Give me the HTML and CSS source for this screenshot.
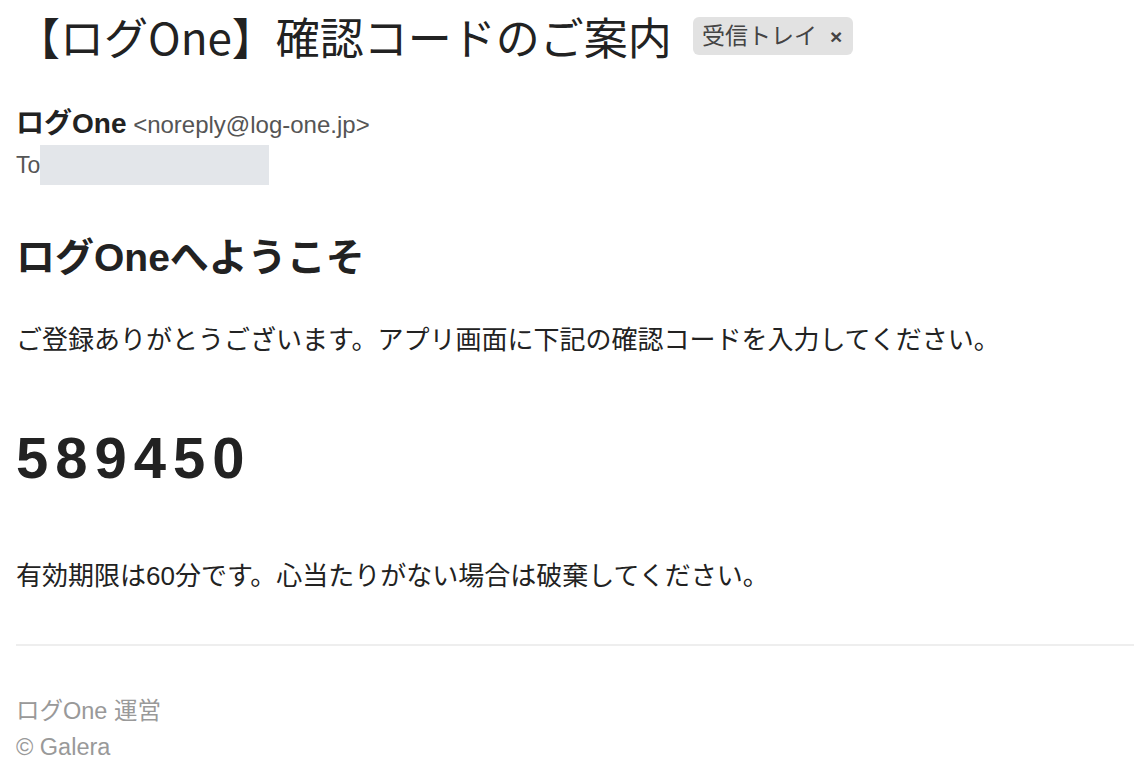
FILE: index.html
```html
<!DOCTYPE html>
<html lang="ja">
  <head>
    <meta charset="UTF-8" />
    <meta name="viewport" content="width=device-width, initial-scale=1.0" />
    <title>【ログOne】確認コードのご案内</title>
    <link rel="stylesheet" href="styles.css">
  </head>
  <body>
    <div class="mail">
      <div class="subjectRow">
        <h1 class="subject">【ログOne】確認コードのご案内</h1>
        <span class="label">受信トレイ <span class="labelClose">×</span></span>
      </div>

      <div class="header">
        <div class="from"><b class="fromName">ログOne</b> <span class="fromAddr">&lt;noreply@log-one.jp&gt;</span></div>
        <div class="to">To<span class="toMask"></span></div>
      </div>

      <div class="body">
        <h2 class="welcome">ログOneへようこそ</h2>
        <p class="text">ご登録ありがとうございます。アプリ画面に下記の確認コードを入力してください。</p>
        <p class="code">589450</p>
        <p class="text expire">有効期限は60分です。心当たりがない場合は破棄してください。</p>
        <hr class="line" />
        <p class="footer">ログOne 運営<br />© Galera</p>
      </div>
    </div>
  </body>
</html>
```

FILE: styles.css
```css
body {
  margin: 0;
  background: #fff;
  color: #222;
  font-family: "Liberation Sans", "Noto Sans CJK JP", sans-serif;
}
.mail {
  padding: 0 0 0 16px;
}
.subjectRow {
  display: flex;
  align-items: center;
  gap: 21px;
  height: 72px;
}
.subject {
  margin: 0;
  font-family: "Noto Sans CJK JP", sans-serif;
  font-size: 44px;
  font-weight: 400;
  color: #222;
}
.label {
  background: #e2e2e2;
  border-radius: 6px;
  padding: 1px 11px 2px 9px;
  font-family: "Noto Sans CJK JP", sans-serif;
  font-size: 23px;
  color: #444;
  line-height: 32px;
}
.labelClose {
  font-family: "Liberation Sans", sans-serif;
  font-weight: 700;
  font-size: 21px;
  margin-left: 8px;
}
.header {
  margin-top: 32px;
}
.from {
  font-size: 24px;
  line-height: 40px;
}
.fromName {
  font-size: 28px;
  color: #222;
}
.fromAddr {
  color: #555;
}
.to {
  display: flex;
  align-items: center;
  font-size: 23px;
  color: #555;
  height: 40px;
}
.toMask {
  display: inline-block;
  width: 229px;
  height: 40px;
  background: #e3e6ea;
}
.body {
  margin-top: 38px;
}
.welcome {
  margin: 0;
  font-size: 39px;
  line-height: 70px;
  font-weight: 700;
  color: #222;
}
.text {
  margin: 27px 0 0 0;
  font-size: 26px;
  line-height: 40px;
  color: #222;
}
.code {
  margin: 58px 0 0 0;
  font-size: 58px;
  font-weight: 700;
  letter-spacing: 7px;
  line-height: 80px;
  color: #222;
}
.expire {
  margin-top: 58px;
}
.line {
  border: none;
  border-top: 2px solid #eeeeee;
  margin: 48px 0 0 0;
}
.footer {
  margin: 47px 0 0 0;
  font-size: 23.5px;
  line-height: 36px;
  color: #999;
}
```
